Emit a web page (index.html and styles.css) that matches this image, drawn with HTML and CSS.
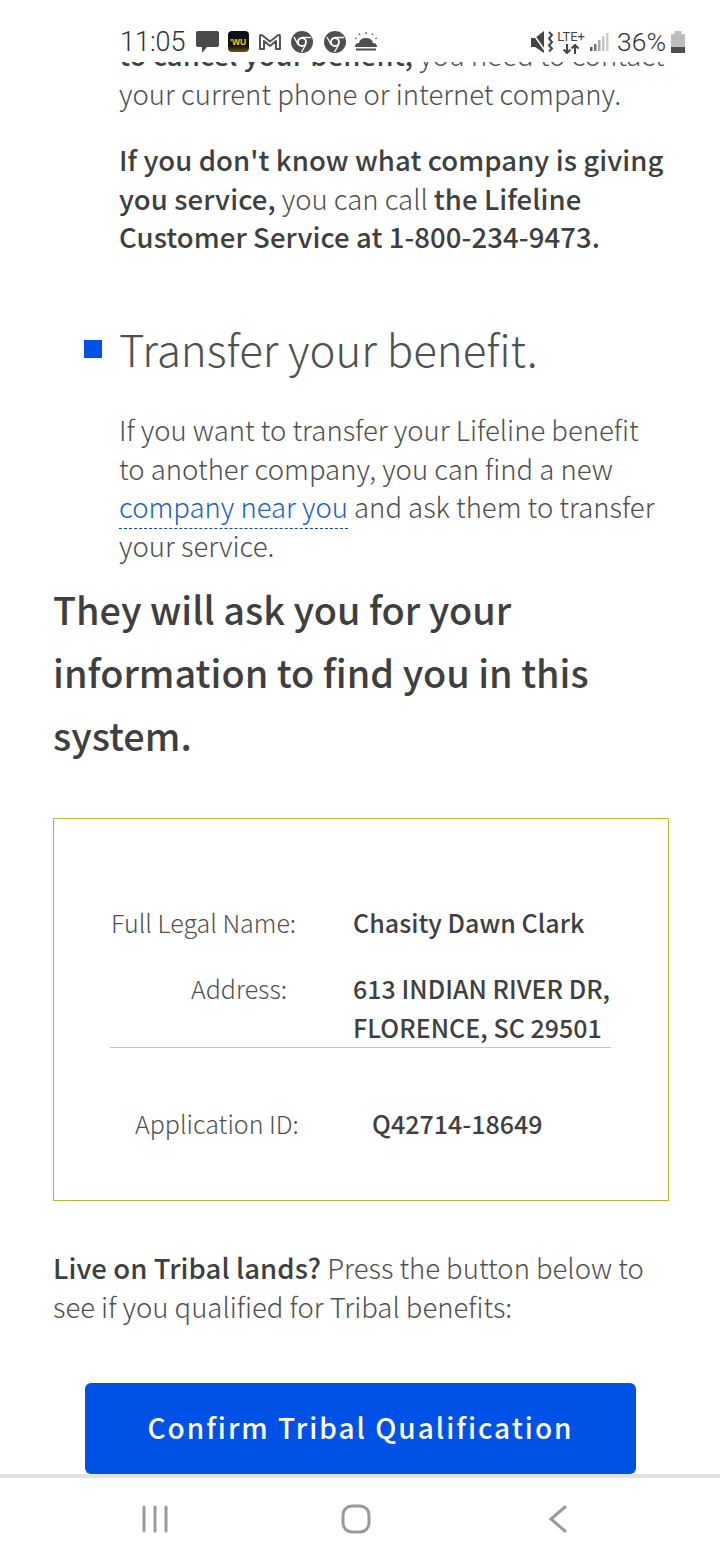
FILE: index.html
```html
<!DOCTYPE html>
<html lang="en">
<head>
<meta charset="utf-8">
<title>Lifeline</title>
<link rel="stylesheet" href="styles.css">
</head>
<body>
<div class="screen">
  <header class="status">
    <div class="status-left">
      <span class="clock">11:05</span>
      <svg class="ico bubble" width="23" height="22" viewBox="0 0 23 22"><path d="M2 0h19a2 2 0 0 1 2 2v12a2 2 0 0 1-2 2H11l-4 5q-1 1-1-1v-4H2a2 2 0 0 1-2-2V2a2 2 0 0 1 2-2z" fill="#4a4a4a"/></svg>
      <span class="wu">'WU</span>
      <svg class="ico" width="24" height="18" viewBox="0 0 24 18"><path d="M2 16V3.500Q2 1 4.500 2.500L12 8.500l7.500-6Q22 1 22 3.500V16h-4V8L12 13 6 8v8z" fill="none" stroke="#555" stroke-width="2" stroke-linejoin="round"/></svg>
      <svg class="ico" width="22" height="22" viewBox="0 0 22 22"><circle cx="11" cy="11" r="11" fill="#4f4f4f"/><circle cx="11" cy="11" r="4" fill="#4f4f4f" stroke="#fff" stroke-width="1.800"/><path d="M11 6.500h9M7 13.500 3 6M14.800 13.500 10.500 21" stroke="#fff" stroke-width="1.300"/></svg>
      <svg class="ico chrome-next" width="22" height="22" viewBox="0 0 22 22"><circle cx="11" cy="11" r="11" fill="#4f4f4f"/><circle cx="11" cy="11" r="4" fill="#4f4f4f" stroke="#fff" stroke-width="1.800"/><path d="M11 6.500h9M7 13.500 3 6M14.800 13.500 10.500 21" stroke="#fff" stroke-width="1.300"/></svg>
      <svg class="ico" width="22" height="19" viewBox="0 0 22 19"><path d="M0 15q0-4 4-4 1-5 7-5t7 5q4 0 4 4zM1 16.500h20v2H1z" fill="#4f4f4f"/><path d="M11 0v3M4 1.500 5.500 4M18 1.500 16.500 4M0 6l2 1M22 6l-2 1" stroke="#777" stroke-width="1.500" stroke-dasharray="2 1"/></svg>
    </div>
    <div class="status-right">
      <svg class="ico speaker" width="23" height="22" viewBox="0 0 23 22"><path d="M0 7h4l9-7v22l-9-6H0z" fill="#444"/><path d="M0 0l15 21" stroke="#fff" stroke-width="1.500"/><path d="M18 1l3 3-3 3.500 3 3.500-3 3.500 3 3-3 3" fill="none" stroke="#444" stroke-width="2"/></svg>
      <div class="net"><span class="lte">LTE+</span><svg width="18" height="10" viewBox="0 0 18 10"><path d="M5 0v9M1.500 5.500 5 9l3.500-3.500M13 10V1M9.500 4.500 13 1l3.500 3.500" fill="none" stroke="#444" stroke-width="2"/></svg></div>
      <svg class="bars" width="19" height="20" viewBox="0 0 19 20"><rect x="0" y="15" width="2.500" height="4" fill="#555"/><rect x="4" y="12" width="2.500" height="7" fill="#777"/><rect x="8" y="8" width="2.500" height="11" fill="#aaa"/><rect x="12" y="4" width="2.500" height="15" fill="#c4c4c4"/><rect x="16" y="1" width="2.500" height="18" fill="#ccc"/></svg>
      <span class="pct">36%</span>
      <svg class="ico" width="14" height="22" viewBox="0 0 14 22"><path d="M3.500 0h7v3H14v19H0V3h3.500z" fill="#bdbdbd"/><rect y="16" width="14" height="6" fill="#4f4f4f"/></svg>
    </div>
  </header>

  <main class="page">
    <section class="steps">
      <p class="para"><b>to cancel your benefit,</b> you need to contact your current phone or internet company.</p>
      <p class="para"><b>If you don't know what company is giving you service,</b> you can call <b>the Lifeline Customer Service at 1-800-234-9473.</b></p>
      <h2 class="step-title">Transfer your benefit.</h2>
      <p class="para">If you want to transfer your Lifeline benefit to another company, you can find a new <a class="link" href="#">company near you</a> and ask them to transfer your service.</p>
    </section>

    <h3 class="lead">They will ask you for your information to find you in this system.</h3>

    <section class="card">
      <div class="row row-name"><span class="label">Full Legal Name:</span><strong class="value">Chasity Dawn Clark</strong></div>
      <div class="row row-addr"><span class="label">Address:</span><strong class="value">613 INDIAN RIVER DR, FLORENCE, SC 29501</strong></div>
      <div class="row row-app"><span class="label">Application ID:</span><strong class="value">Q42714-18649</strong></div>
    </section>

    <p class="tribal"><b>Live on Tribal lands?</b> Press the button below to see if you qualified for Tribal benefits:</p>
    <button class="cta">Confirm Tribal Qualification</button>
  </main>

  <nav class="navbar">
    <svg width="28" height="28" viewBox="0 0 28 28"><path d="M3 2v24M14 2v24M25 2v24" stroke="#9a9a9a" stroke-width="3" stroke-linecap="round"/></svg>
    <svg width="30" height="30" viewBox="0 0 30 30"><rect x="2" y="2" width="26" height="26" rx="9" fill="none" stroke="#9a9a9a" stroke-width="3"/></svg>
    <svg width="26" height="30" viewBox="0 0 26 30"><path d="M22 3 8 15l14 12" fill="none" stroke="#9a9a9a" stroke-width="3" stroke-linecap="round"/></svg>
  </nav>
</div>
</body>
</html>
```

FILE: styles.css
```css
* { box-sizing: border-box; }
html, body { margin: 0; padding: 0; }
body {
  width: 720px;
  height: 1560px;
  overflow: hidden;
  background: #fff;
  color: #505050;
  font-family: "Noto Sans CJK JP", "Noto Sans", sans-serif;
  font-weight: 300;
}
.screen { position: relative; width: 720px; height: 1560px; overflow: hidden; }
b, strong { font-weight: 500; letter-spacing: .08px; color: #3f3f3f; }

/* status bar sits above the scrolled page */
.status {
  position: absolute; top: 0; left: 0; right: 0; height: 62px;
  background: #fff; z-index: 2;
  display: flex; justify-content: space-between; align-items: center;
  padding: 21px 35px 0 120px;
}
.status-left, .status-right { display: flex; align-items: center; }
.status-left { gap: 9px; }
.status-right { gap: 5px; }
.bubble { margin-left: 1px; }
.chrome-next { margin-left: 2px; }
.speaker { margin-right: -2px; }
.clock { font-family: "Roboto", sans-serif; font-size: 27px; font-weight: 300; color: #333; }
.pct { font-family: "Roboto", sans-serif; font-size: 26.500px; font-weight: 300; color: #333; margin: 0 0 0 3px; }
.ico, .bars { flex: none; display: block; }
.wu {
  width: 21px; height: 21px; border-radius: 4px; background: linear-gradient(#111 70%, #6b5600); color: #f7d000;
  font: 700 8.500px "Liberation Sans", sans-serif; display: flex; align-items: center; justify-content: center;
}
.net { display: flex; flex-direction: column; align-items: center; line-height: 1; }
.lte { font: 400 13px "Roboto", sans-serif; color: #444; }

.page { padding: 0 51px 0 53px; height: 1478px; overflow: hidden; }
.steps { margin: 35px -1px 0 0; padding-left: 66px; }
.para { margin: 0 0 28px; font-size: 27.500px; line-height: 38.600px; }
.step-title { position: relative; margin: 62px 0 32px; font-size: 43.800px; line-height: 60px; font-weight: 300; }
.step-title::before {
  content: ""; position: absolute; left: -35px; top: 22px;
  width: 18px; height: 18px; background: #0051e6;
}
.step-title ~ .para { margin-bottom: 13px; }
.link { color: #1f5fc4; text-decoration: none; border-bottom: 1px dashed #0b4ba8; padding-bottom: 2px; }
.lead { margin: 0; font-size: 37.800px; line-height: 63px; font-weight: 500; color: #3f3f3f; }

.card {
  margin-top: 52px; height: 383px; border: 1px solid #b4b92e;
  padding: 84px 57px 0 56px;
}
.row { display: flex; font-size: 25px; line-height: 39px; }
.label { flex: none; width: 243px; padding-left: 1px; }
.value { font-size: 25px; letter-spacing: .03px; }
.row-addr { margin-top: 27px; border-bottom: 1px solid #c4c4c4; height: 79px; }
.row-addr .label { padding-left: 81px; }
.row-app { margin-top: 56px; padding-left: 24px; }
.row-app .label { width: 238px; }

.tribal { margin: 47px 0 0; font-size: 27.500px; line-height: 39px; }
.cta {
  display: block; width: 551px; height: 91px; margin: 57px 0 0 32px; padding: 0 0 4px;
  border: 0; border-radius: 6px; background: #0051e6; color: #fff;
  font: 500 28px "Noto Sans CJK JP", "Noto Sans", sans-serif; letter-spacing: 2px;
}

.navbar {
  position: absolute; left: 0; right: 0; bottom: 0; height: 86px;
  background: #fff; border-top: 4px solid #e2e2e2;
  display: flex; align-items: center; padding-left: 141px; gap: 172px;
}
```
